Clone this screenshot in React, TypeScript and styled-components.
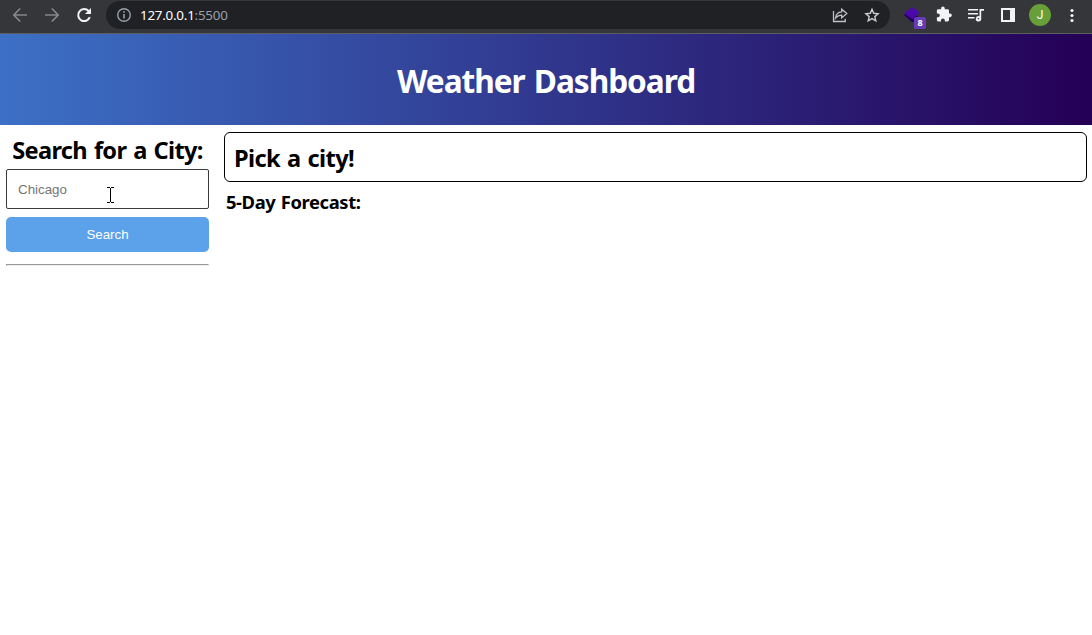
import React from "react";
import styled, { createGlobalStyle } from "styled-components";

const GlobalStyle = createGlobalStyle`
  * { box-sizing: border-box; }
  body {
    margin: 0;
    background: #fff;
    color: #000;
    font-family: "Segoe UI", "Noto Sans", sans-serif;
    overflow: hidden;
  }
`;

const Toolbar = styled.div`
  height: 34px;
  display: flex;
  align-items: flex-start;
  background: #35363a;
  border-bottom: 1px solid #5c5d60;
`;

const Icon = styled.svg<{ $size?: number }>`
  width: ${(p) => p.$size ?? 20}px;
  height: ${(p) => p.$size ?? 20}px;
  flex: none;
  display: block;
`;

const NavButtons = styled.div`
  display: flex;
  gap: 12px;
  padding: 5px 0 0 10px;
  width: 106px;
`;

const AddressBar = styled.div`
  width: 784px;
  height: 28px;
  margin-top: 1px;
  padding: 0 8px 0 9px;
  display: flex;
  align-items: center;
  border-radius: 14px;
  background: #202124;
`;

const Url = styled.span`
  flex: 1;
  margin-left: 7px;
  font-size: 13.4px;
  line-height: 20px;
  letter-spacing: -0.24px;
  color: #9aa0a6;
`;

const Host = styled.span`
  color: #fff;
`;

const AddressActions = styled.div`
  display: flex;
  gap: 12px;
`;

const Extensions = styled.div`
  display: flex;
  align-items: center;
  height: 30px;
  padding-left: 13px;
`;

const ExtensionIcon = styled.div`
  position: relative;
  width: 22px;
  height: 30px;
  margin-right: 9px;
`;

const Badge = styled.span`
  position: absolute;
  left: 11px;
  top: 17px;
  width: 12px;
  height: 12px;
  border-radius: 2px;
  background: #673ab7;
  color: #fff;
  font: bold 9px/12px "Noto Sans", sans-serif;
  text-align: center;
`;

const ToolbarIcons = styled.div`
  display: flex;
  gap: 12px;
`;

const Avatar = styled.div`
  width: 22px;
  height: 22px;
  margin: 0 11px;
  border-radius: 50%;
  background: #689f38;
  color: #fff;
  font: 12px/22px Roboto, sans-serif;
  text-align: center;
`;

const Header = styled.header`
  height: 91px;
  padding-top: 25px;
  background: linear-gradient(90deg, #3c70c6, #240056);
  color: #fff;
  text-align: center;
`;

const Title = styled.h1`
  margin: 0;
  font-size: 31.6px;
  line-height: 43px;
  letter-spacing: -1.03px;
  word-spacing: 2px;
`;

const Main = styled.main`
  display: flex;
  gap: 15px;
  padding: 7px 5px 0 6px;
`;

const SearchPanel = styled.aside`
  width: 203px;
  padding-top: 2px;
`;

const SearchHeading = styled.h2`
  margin: 0 0 3px;
  font-size: 23.6px;
  line-height: 32px;
  letter-spacing: -0.68px;
  word-spacing: 1.5px;
  text-align: center;
  white-space: nowrap;
`;

const InputWrap = styled.div`
  position: relative;
`;

const CityInput = styled.input`
  display: block;
  width: 100%;
  height: 40px;
  padding: 0 11px;
  border: 1px solid #3b3b3b;
  border-radius: 2px;
  outline: none;
  background: #fff;
  font: 13.333px "Liberation Sans", Arial, sans-serif;
  &::placeholder { color: #757575; opacity: 1; }
`;

const TextCursor = styled.svg`
  position: absolute;
  left: 101px;
  top: 18px;
  width: 8px;
  height: 17px;
`;

const SearchButton = styled.button`
  display: block;
  width: 100%;
  height: 35px;
  margin-top: 8px;
  padding: 0;
  border: 0;
  border-radius: 5px;
  background: #5ba2ea;
  color: #fff;
  font: 13.333px "Liberation Sans", Arial, sans-serif;
`;

const Divider = styled.hr`
  margin: 12px 0 0;
`;

const Content = styled.section`
  flex: 1;
`;

const CurrentCity = styled.div`
  height: 50px;
  padding: 9px;
  border: 1px solid #000;
  border-radius: 6px;
`;

const CityName = styled.h2`
  margin: 0;
  font-size: 23.6px;
  line-height: 32px;
  letter-spacing: -0.62px;
  word-spacing: 1.5px;
`;

const ForecastHeading = styled.h3`
  margin: 7px 0 0 2px;
  font-size: 18.4px;
  line-height: 25px;
  letter-spacing: -0.4px;
  word-spacing: 1px;
`;

export default function App() {
  return (
    <>
      <GlobalStyle />
      <Toolbar>
        <NavButtons>
          <Icon viewBox="0 0 20 20" fill="none" stroke="#85878b" strokeWidth="1.7">
            <path d="M17 10H4M10.2 3.5 3.8 10l6.4 6.5" />
          </Icon>
          <Icon viewBox="0 0 20 20" fill="none" stroke="#85878b" strokeWidth="1.7">
            <path d="M3 10h13M9.8 3.5l6.4 6.5-6.4 6.5" />
          </Icon>
          <Icon viewBox="0 0 20 20" fill="none" stroke="#f1f3f4" strokeWidth="2">
            <path d="M15.8 12.2A6 6 0 1 1 14.6 6" />
            <path d="M17 3v6h-6z" fill="#f1f3f4" stroke="none" />
          </Icon>
        </NavButtons>
        <AddressBar>
          <Icon $size={18} viewBox="0 0 18 18" fill="none" stroke="#9aa0a6" strokeWidth="1.4">
            <circle cx="9" cy="9" r="6.3" />
            <path d="M9 8v4.5M9 5.3v1.5" strokeWidth="1.6" />
          </Icon>
          <Url><Host>127.0.0.1</Host>:5500</Url>
          <AddressActions>
            <Icon viewBox="0 0 20 20" fill="none" stroke="#bdc1c6" strokeWidth="1.3">
              <path d="M3.5 6v10.5h11.8v-2.8M11.7 4.2v2.7C8 7.1 5.9 9.6 5.5 13.2c1.6-2 3.6-3 6.2-3v2.7L16.8 8.5z" />
            </Icon>
            <Icon viewBox="0 0 20 20" fill="none" stroke="#c7cacd" strokeWidth="1.4">
              <path d="m10 4.3 1.7 4 4.4.4-3.3 2.9 1 4.3-3.8-2.3-3.8 2.3 1-4.3-3.3-2.9 4.4-.4z" />
            </Icon>
          </AddressActions>
        </AddressBar>
        <Extensions>
          <ExtensionIcon>
            <Icon $size={22} viewBox="0 0 22 22">
              <path d="m1 15 3-3 11 4-5 7z" fill="#21005f" />
              <path d="m9 7 8 5.5-7.5 6.5L1 13.5z" fill="#4a09a8" />
            </Icon>
            <Badge>8</Badge>
          </ExtensionIcon>
          <ToolbarIcons>
            <Icon viewBox="-2 0 28 28" fill="#f1f3f4">
              <path d="M20.5 12H19V8c0-1.1-.9-2-2-2h-4V4.5a2.5 2.5 0 0 0-5 0V6H4c-1.1 0-2 .9-2 2v3.8h1.5a2.7 2.7 0 0 1 0 5.4H2V21c0 1.1.9 2 2 2h3.8v-1.5a2.7 2.7 0 0 1 5.4 0V23H17c1.1 0 2-.9 2-2v-4h1.5a2.5 2.5 0 0 0 0-5z" />
            </Icon>
            <Icon viewBox="0 0 20 20" fill="#f1f3f4">
              <path d="M2 4h10v1.6H2zM2 8h10v1.6H2zM2 12h6.5v1.6H2zM13.5 4H18v1.8h-2.8v8a2.7 2.7 0 1 1-1.7-2.5z" />
              <circle cx="12.5" cy="13.8" r=".8" fill="#35363a" />
            </Icon>
            <Icon viewBox="0 0 20 20">
              <path d="M3 3h14v14H3z" fill="#f1f3f4" />
              <path d="M5 5h7v10H5z" fill="#35363a" />
            </Icon>
          </ToolbarIcons>
          <Avatar>J</Avatar>
          <Icon viewBox="0 0 20 20" fill="#f1f3f4">
            <circle cx="10" cy="5.5" r="1.6" />
            <circle cx="10" cy="10.5" r="1.6" />
            <circle cx="10" cy="15.5" r="1.6" />
          </Icon>
        </Extensions>
      </Toolbar>
      <Header>
        <Title>Weather Dashboard</Title>
      </Header>
      <Main>
        <SearchPanel>
          <SearchHeading>Search for a City:</SearchHeading>
          <InputWrap>
            <CityInput placeholder="Chicago" />
            <TextCursor viewBox="0 0 8 17" fill="none" stroke="#000">
              <path d="M0 .5h3M4 .5h3M0 15.5h3M4 15.5h3M3.5 1v14" />
            </TextCursor>
          </InputWrap>
          <SearchButton>Search</SearchButton>
          <Divider />
        </SearchPanel>
        <Content>
          <CurrentCity>
            <CityName>Pick a city!</CityName>
          </CurrentCity>
          <ForecastHeading>5-Day Forecast:</ForecastHeading>
        </Content>
      </Main>
    </>
  );
}
